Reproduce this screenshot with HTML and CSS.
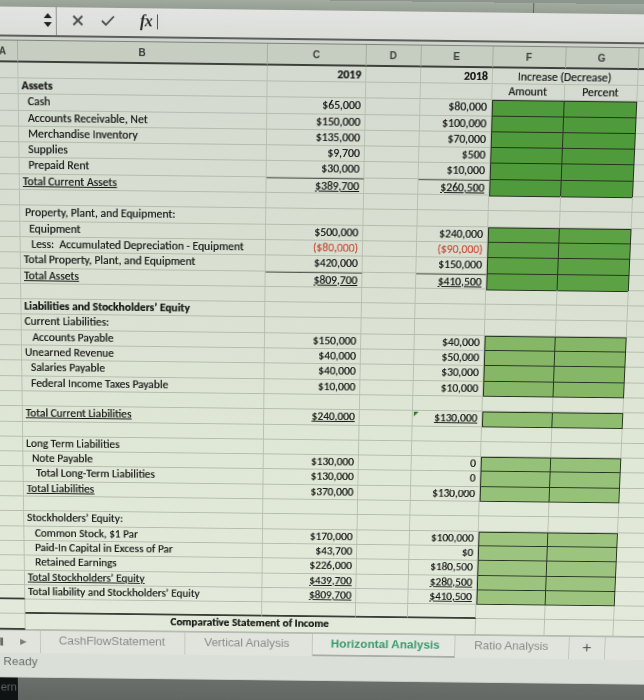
FILE: index.html
```html
<!DOCTYPE html>
<html lang="en">
<head>
<meta charset="utf-8">
<title>Horizontal Analysis</title>
<link rel="stylesheet" href="styles.css">
</head>
<body>
<div class="page">
  <div class="topband"><div class="tb-split"></div></div>
  <div class="toolbar">
    <div class="namebox">
      <svg class="spin" width="8" height="14" viewBox="0 0 8 14"><polygon points="4,0 8,5 0,5" fill="#1d1d1d"/><polygon points="0,9 8,9 4,14" fill="#1d1d1d"/></svg>
    </div>
    <div class="ficons">
      <svg class="ico" width="12" height="12" viewBox="0 0 12 12"><path d="M1.5 1.5 L10.5 10.5 M10.5 1.5 L1.5 10.5" stroke="#4a4a4a" stroke-width="1.8" fill="none"/></svg>
      <svg class="ico chk" width="14" height="12" viewBox="0 0 14 12"><path d="M1 6 L5 10 L13 1.5" stroke="#4a4a4a" stroke-width="1.8" fill="none"/></svg>
      <span class="fx">fx</span>
      <span class="caret"></span>
    </div>
  </div>
  <div class="gapstrip"></div>

  <div class="sheet">
    <div class="row hdr"><div class="ca">A</div><div class="cb">B</div><div class="cc">C</div><div class="cd">D</div><div class="ce">E</div><div class="cf">F</div><div class="cg">G</div><div class="ch"></div></div>

    <div class="row r-head1"><div class="ca"></div><div class="cb"></div><div class="cc n bold">2019</div><div class="cd"></div><div class="ce n bold">2018</div><div class="cfg mid">Increase (Decrease)</div><div class="ch"></div></div>
    <div class="row"><div class="ca"></div><div class="cb bold">Assets</div><div class="cc"></div><div class="cd"></div><div class="ce"></div><div class="cf mid">Amount</div><div class="cg mid">Percent</div><div class="ch"></div></div>

    <div class="row blk g1 first"><div class="ca"></div><div class="cb i2">Cash</div><div class="cc n">$65,000</div><div class="cd"></div><div class="ce n">$80,000</div><div class="cf grn"></div><div class="cg grn"></div><div class="ch"></div></div>
    <div class="row blk g1"><div class="ca"></div><div class="cb i2">Accounts Receivable, Net</div><div class="cc n">$150,000</div><div class="cd"></div><div class="ce n">$100,000</div><div class="cf grn"></div><div class="cg grn"></div><div class="ch"></div></div>
    <div class="row blk g1"><div class="ca"></div><div class="cb i2">Merchandise Inventory</div><div class="cc n">$135,000</div><div class="cd"></div><div class="ce n">$70,000</div><div class="cf grn"></div><div class="cg grn"></div><div class="ch"></div></div>
    <div class="row blk g1"><div class="ca"></div><div class="cb i2">Supplies</div><div class="cc n">$9,700</div><div class="cd"></div><div class="ce n">$500</div><div class="cf grn"></div><div class="cg grn"></div><div class="ch"></div></div>
    <div class="row blk g1"><div class="ca"></div><div class="cb i2">Prepaid Rent</div><div class="cc n">$30,000</div><div class="cd"></div><div class="ce n">$10,000</div><div class="cf grn"></div><div class="cg grn"></div><div class="ch"></div></div>
    <div class="row blk g1 total"><div class="ca"></div><div class="cb"><u>Total Current Assets</u></div><div class="cc n"><u>$389,700</u></div><div class="cd"></div><div class="ce n"><u>$260,500</u></div><div class="cf grn"></div><div class="cg grn"></div><div class="ch"></div></div>
    <div class="row"><div class="ca"></div><div class="cb"></div><div class="cc"></div><div class="cd"></div><div class="ce"></div><div class="cf"></div><div class="cg"></div><div class="ch"></div></div>

    <div class="row"><div class="ca"></div><div class="cb i1">Property, Plant, and Equipment:</div><div class="cc"></div><div class="cd"></div><div class="ce"></div><div class="cf"></div><div class="cg"></div><div class="ch"></div></div>
    <div class="row blk g2 first"><div class="ca"></div><div class="cb i2">Equipment</div><div class="cc n">$500,000</div><div class="cd"></div><div class="ce n">$240,000</div><div class="cf grn"></div><div class="cg grn"></div><div class="ch"></div></div>
    <div class="row blk g2"><div class="ca"></div><div class="cb i3">Less:&nbsp; Accumulated Depreciation - Equipment</div><div class="cc n red">($80,000)</div><div class="cd"></div><div class="ce n red">($90,000)</div><div class="cf grn"></div><div class="cg grn"></div><div class="ch"></div></div>
    <div class="row blk g2"><div class="ca"></div><div class="cb">Total Property, Plant, and Equipment</div><div class="cc n">$420,000</div><div class="cd"></div><div class="ce n">$150,000</div><div class="cf grn"></div><div class="cg grn"></div><div class="ch"></div></div>
    <div class="row blk g2 total"><div class="ca"></div><div class="cb"><u>Total Assets</u></div><div class="cc n"><u>$809,700</u></div><div class="cd"></div><div class="ce n"><u>$410,500</u></div><div class="cf grn"></div><div class="cg grn"></div><div class="ch"></div></div>
    <div class="row"><div class="ca"></div><div class="cb"></div><div class="cc"></div><div class="cd"></div><div class="ce"></div><div class="cf"></div><div class="cg"></div><div class="ch"></div></div>

    <div class="row"><div class="ca"></div><div class="cb bold">Liabilities and Stockholders’ Equity</div><div class="cc"></div><div class="cd"></div><div class="ce"></div><div class="cf"></div><div class="cg"></div><div class="ch"></div></div>
    <div class="row"><div class="ca"></div><div class="cb">Current Liabilities:</div><div class="cc"></div><div class="cd"></div><div class="ce"></div><div class="cf"></div><div class="cg"></div><div class="ch"></div></div>
    <div class="row blk g3 first"><div class="ca"></div><div class="cb i3">Accounts Payable</div><div class="cc n">$150,000</div><div class="cd"></div><div class="ce n">$40,000</div><div class="cf grn"></div><div class="cg grn"></div><div class="ch"></div></div>
    <div class="row blk g3"><div class="ca"></div><div class="cb">Unearned Revenue</div><div class="cc n">$40,000</div><div class="cd"></div><div class="ce n">$50,000</div><div class="cf grn"></div><div class="cg grn"></div><div class="ch"></div></div>
    <div class="row blk g3"><div class="ca"></div><div class="cb i2">Salaries Payable</div><div class="cc n">$40,000</div><div class="cd"></div><div class="ce n">$30,000</div><div class="cf grn"></div><div class="cg grn"></div><div class="ch"></div></div>
    <div class="row blk g3"><div class="ca"></div><div class="cb i2">Federal Income Taxes Payable</div><div class="cc n">$10,000</div><div class="cd"></div><div class="ce n">$10,000</div><div class="cf grn"></div><div class="cg grn"></div><div class="ch"></div></div>
    <div class="row"><div class="ca"></div><div class="cb"></div><div class="cc"></div><div class="cd"></div><div class="ce"></div><div class="cf"></div><div class="cg"></div><div class="ch"></div></div>
    <div class="row blk g4 first"><div class="ca"></div><div class="cb"><u>Total Current Liabilities</u></div><div class="cc n"><u>$240,000</u></div><div class="cd"></div><div class="ce n flag"><u>$130,000</u></div><div class="cf grn"></div><div class="cg grn"></div><div class="ch"></div></div>
    <div class="row"><div class="ca"></div><div class="cb"></div><div class="cc"></div><div class="cd"></div><div class="ce"></div><div class="cf"></div><div class="cg"></div><div class="ch"></div></div>

    <div class="row"><div class="ca"></div><div class="cb">Long Term Liabilities</div><div class="cc"></div><div class="cd"></div><div class="ce"></div><div class="cf"></div><div class="cg"></div><div class="ch"></div></div>
    <div class="row blk g5 first"><div class="ca"></div><div class="cb i2">Note Payable</div><div class="cc n">$130,000</div><div class="cd"></div><div class="ce n">0</div><div class="cf grn"></div><div class="cg grn"></div><div class="ch"></div></div>
    <div class="row blk g5"><div class="ca"></div><div class="cb i4">Total Long-Term Liabilities</div><div class="cc n">$130,000</div><div class="cd"></div><div class="ce n">0</div><div class="cf grn"></div><div class="cg grn"></div><div class="ch"></div></div>
    <div class="row blk g5"><div class="ca"></div><div class="cb"><u>Total Liabilities</u></div><div class="cc n">$370,000</div><div class="cd"></div><div class="ce n">$130,000</div><div class="cf grn"></div><div class="cg grn"></div><div class="ch"></div></div>
    <div class="row"><div class="ca"></div><div class="cb"></div><div class="cc"></div><div class="cd"></div><div class="ce"></div><div class="cf"></div><div class="cg"></div><div class="ch"></div></div>

    <div class="row"><div class="ca"></div><div class="cb">Stockholders’ Equity:</div><div class="cc"></div><div class="cd"></div><div class="ce"></div><div class="cf"></div><div class="cg"></div><div class="ch"></div></div>
    <div class="row blk g6 first"><div class="ca"></div><div class="cb i3">Common Stock, $1 Par</div><div class="cc n">$170,000</div><div class="cd"></div><div class="ce n">$100,000</div><div class="cf grn"></div><div class="cg grn"></div><div class="ch"></div></div>
    <div class="row blk g6"><div class="ca"></div><div class="cb i3">Paid-In Capital in Excess of Par</div><div class="cc n">$43,700</div><div class="cd"></div><div class="ce n">$0</div><div class="cf grn"></div><div class="cg grn"></div><div class="ch"></div></div>
    <div class="row blk g6"><div class="ca"></div><div class="cb i3">Retained Earnings</div><div class="cc n">$226,000</div><div class="cd"></div><div class="ce n">$180,500</div><div class="cf grn"></div><div class="cg grn"></div><div class="ch"></div></div>
    <div class="row blk g6"><div class="ca"></div><div class="cb"><u>Total Stockholders’ Equity</u></div><div class="cc n"><u>$439,700</u></div><div class="cd"></div><div class="ce n"><u>$280,500</u></div><div class="cf grn"></div><div class="cg grn"></div><div class="ch"></div></div>
    <div class="row blk g6 endA"><div class="ca"></div><div class="cb">Total liability and Stockholders’ Equity</div><div class="cc n"><u>$809,700</u></div><div class="cd"></div><div class="ce n"><u>$410,500</u></div><div class="cf grn"></div><div class="cg grn"></div><div class="ch"></div></div>
    <div class="row closing"><div class="ca"></div><div class="cb"></div><div class="cc"></div><div class="cd"></div><div class="ce"></div><div class="cf"></div><div class="cg"></div><div class="ch"></div></div>
    <div class="row endA cut"><div class="ca"></div><div class="cbe bold">Comparative Statement of Income</div><div class="cf"></div><div class="cg"></div><div class="ch"></div></div>
  </div>

  <div class="tabs">
    <div class="tab-nav"><span class="prev"></span><span class="next">&#9654;</span></div>
    <div class="tab t1">CashFlowStatement</div>
    <div class="tab t2">Vertical Analysis</div>
    <div class="tab t3 active">Horizontal Analysis</div>
    <div class="tab t4">Ratio Analysis</div>
    <div class="tab t5">+</div>
    <div class="tab-rest"></div>
  </div>
  <div class="status">Ready</div>
  <div class="bottom"><span class="ern">ern</span></div>
</div>
</body>
</html>
```

FILE: styles.css
```css
html, body {
  margin: 0;
  height: 100%;
  overflow: hidden;
}
body {
  background: #8d968c;
  font-family: Carlito, Lato, "Open Sans", sans-serif;
  color: #141613;
}
.page {
  width: 770px;
  margin-left: -30px;
  transform-origin: 320px 40px;
  transform: perspective(1000px) rotateX(-5.3deg) rotate(0.7deg);
  background: #d9ddd5;
}

/* top / formula bar */
.topband {
  height: 10px;
  background: linear-gradient(#a3aba1, #959e93);
  position: relative;
}
.tb-split {
  position: absolute;
  left: 562px;
  top: 0;
  width: 1px;
  height: 10px;
  background: #5f665d;
}
.toolbar {
  height: 28px;
  display: flex;
  background: linear-gradient(#e3e4e1, #dbddd9);
  border-bottom: 2px solid #5b5f5a;
}
.namebox {
  width: 87px;
  border-right: 1px solid #8e918c;
  display: flex;
  justify-content: flex-end;
  align-items: center;
  padding-right: 4px;
  box-sizing: border-box;
}
.spin { display: block; margin-top: -2px; }
.ficons {
  display: flex;
  align-items: center;
  padding-left: 15px;
  margin-top: -2px;
}
.ico { display: block; }
.chk { margin-left: 17px; }
.fx {
  margin-left: 25px;
  font-family: "Liberation Serif", serif;
  font-style: italic;
  font-weight: bold;
  font-size: 16px;
  color: #2e2e2e;
  letter-spacing: -0.5px;
}
.caret {
  width: 1px;
  height: 15px;
  background: #555;
  margin-left: 5px;
}
.gapstrip {
  height: 3px;
  background: #d0d3cd;
  border-bottom: 1px solid #7d827b;
}

/* sheet */
.sheet {
  background: linear-gradient(180deg, #d3d9cf 0%, #d9e0d2 35%, #dfe7d6 70%, #e3eadb 100%);
}
.row {
  display: grid;
  grid-template-columns: 48px 250px 99px 55px 72px 73px 73px 100px;
  height: 16.3px;
  box-sizing: border-box;
  border-bottom: 1px solid #b3bcad;
  font-size: 11.8px;
  line-height: 15px;
  white-space: nowrap;
  text-shadow: 0 0 0.6px rgba(0, 0, 0, 0.55);
}
.row > div {
  border-right: 1px solid #b9c1b3;
  box-sizing: border-box;
  overflow: visible;
  padding: 0 4px 0 3px;
}
.hdr {
  height: 22px;
  line-height: 21px;
  background: #c6cdc1;
  border-bottom: 2px solid #3c403b;
  font-family: "Liberation Sans", Arial, sans-serif;
  font-size: 10px;
  font-weight: bold;
  color: #3b3e3a;
  text-align: center;
  text-shadow: none;
}
.hdr > div { border-right-color: #a6ada1; }
.hdr .ca { text-align: right; padding-right: 11px; }
.r-head1 { height: 16px; line-height: 17px; }
.cfg { grid-column: span 2; }
.cbe { grid-column: span 4; text-align: center; }
.mid { text-align: center; }
.n { text-align: right; }
.bold { font-weight: bold; }
.red { color: #e2593f; }
.i1 { padding-left: 5px !important; }
.i2 { padding-left: 9px !important; }
.i3 { padding-left: 11px !important; }
.i4 { padding-left: 13px !important; }
u { text-decoration-thickness: 1px; text-underline-offset: 1px; }

/* green input blocks */
.row > .grn {
  border-right: 1px solid #26321f;
  border-bottom: 1px solid #26321f;
  margin-bottom: -1px;
}
.row > .cf.grn { border-left: 1px solid #26321f; }
.first > .grn { border-top: 1px solid #26321f; }
.g1 .grn { background: #4f9a3b; }
.g2 .grn { background: #5ca245; }
.g3 .grn { background: #86b767; }
.g4 .grn { background: #8ebd70; }
.g5 .grn { background: #96c178; }
.g6 .grn { background: #9dc47f; }

.flag { position: relative; }
.flag::before {
  content: "";
  position: absolute;
  left: 1px;
  top: 1px;
  border-top: 5px solid #2d7a2d;
  border-right: 5px solid transparent;
}

.total > .cc, .total > .ce { border-top: 1px solid #555a52; }
.closing > .cb, .closing > .cc, .closing > .cd, .closing > .ce { border-bottom: 2px solid #3a3e38; margin-bottom: -1px; }
.endA > .ca { border-bottom: 2px solid #3a3e38; margin-bottom: -1px; }
.cut { height: 18px; line-height: 15px; }

/* sheet tabs */
.tabs {
  display: flex;
  height: 25px;
  background: #e0e4dc;
  border-top: 1px solid #b7bdb3;
  font-family: "Liberation Sans", Arial, sans-serif;
  font-size: 12.5px;
  color: #8a8c88;
  line-height: 23px;
}
.tab-nav {
  width: 64px;
  border-right: 1px solid #c2c7be;
  display: flex;
  align-items: center;
  box-sizing: border-box;
}
.prev {
  width: 3px;
  height: 9px;
  background: #6a6d68;
  margin-left: 21px;
}
.next {
  font-size: 9px;
  color: #7a7d78;
  margin-left: 18px;
}
.tab {
  border-right: 1px solid #c2c7be;
  box-sizing: border-box;
  padding-left: 19px;
}
.t1 { width: 153px; padding-left: 19px; }
.t2 { width: 135px; padding-left: 20px; }
.t3 { width: 151px; }
.t4 { width: 121px; padding-left: 20px; }
.t5 { width: 38px; padding-left: 0; text-align: center; font-size: 17px; color: #555; }
.tab-rest { flex: 1; }
.active {
  color: #3a9b6f;
  font-weight: bold;
  border-bottom: 2px solid #a8ada5;
  background: #e3e7df;
}
.status {
  height: 27px;
  background: #dadfd7;
  font-family: "Liberation Sans", Arial, sans-serif;
  font-size: 12.5px;
  color: #6c6f6a;
  line-height: 20px;
  padding-left: 24px;
  border-bottom: 1px solid #c7ccc4;
}
.bottom {
  height: 60px;
  background: linear-gradient(180deg, #6a6f6b, #545955);
}
.ern {
  display: inline-block;
  width: 39px;
  height: 60px;
  background: #101314;
  color: #5d6166;
  font-family: "Liberation Sans", Arial, sans-serif;
  font-size: 12px;
  line-height: 22px;
  text-align: right;
  box-sizing: border-box;
  padding-right: 1px;
}
```
